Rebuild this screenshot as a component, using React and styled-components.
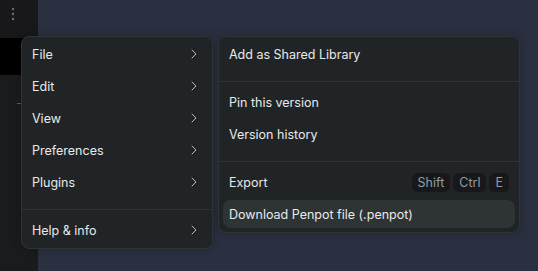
import React from "react";
import styled, { createGlobalStyle } from "styled-components";

const Global = createGlobalStyle`
  html, body { margin: 0; padding: 0; background: #2b3040; }
  body { font-family: Inter, "Noto Sans", sans-serif; }
  #root { width: 538px; height: 271px; overflow: hidden; }
`;

const Page = styled.div`
  position: relative;
  display: flex;
  width: 538px;
  height: 271px;
  background: #2b3040;
`;

const Sidebar = styled.div`
  width: 38px;
  display: flex;
  flex-direction: column;
  background: #1a1b1d;
`;

const SideTop = styled.div`
  height: 38px;
  display: flex;
  justify-content: center;
  padding-top: 7px;
  box-sizing: border-box;
  padding-right: 12px;
  background: #18181a;
`;

const SelectedRow = styled.div`
  height: 37px;
  background: #000;
`;

const SideRest = styled.div`
  flex: 1;
  padding-top: 28px;
  padding-left: 17px;
`;

const Tick = styled.div`
  width: 5px;
  height: 1px;
  background: #5a5e63;
`;

const Canvas = styled.div`
  flex: 1;
  background: #2b3040;
`;

const Menu = styled.div`
  position: absolute;
  top: 36px;
  left: ${(p) => p.$left}px;
  width: ${(p) => p.$width}px;
  box-sizing: border-box;
  background: #212426;
  border: 1px solid #2e3434;
  border-radius: 8px;
  padding: 3px 4px 4px;
  display: flex;
  flex-direction: column;
  gap: 4px;
  box-shadow: 0 0 10px rgba(0, 0, 0, 0.25);
`;

const Item = styled.div`
  height: 28px;
  display: flex;
  align-items: center;
  justify-content: space-between;
  padding: 0 6px 0 6px;
  border-radius: 8px;
  font-size: 12.5px;
  color: #e8e9ea;
  background: ${(p) => (p.$active ? "#2e3434" : "transparent")};
  white-space: nowrap;
`;

const Separator = styled.div`
  height: 1px;
  background: #2e3434;
  margin: 9px -4px 2px;
`;

const Keys = styled.div`
  display: flex;
  gap: 3px;
`;

const Key = styled.span`
  height: 19px;
  display: flex;
  align-items: center;
  padding: 0 6px;
  border-radius: 6px;
  background: #18181a;
  color: #8f9da3;
  font-size: 12.5px;
`;

const Chevron = () => (
  <svg width="16" height="16" viewBox="0 0 16 16" fill="none">
    <path d="M6 4l4 4-4 4" stroke="#b4b8bb" strokeWidth="1" strokeLinecap="round" strokeLinejoin="round" />
  </svg>
);

const Dots = () => (
  <svg width="4" height="14" viewBox="0 0 4 14">
    <circle cx="2" cy="2" r="1.2" fill="#6b6f74" />
    <circle cx="2" cy="7" r="1.2" fill="#6b6f74" />
    <circle cx="2" cy="12" r="1.2" fill="#6b6f74" />
  </svg>
);

export default function App() {
  const main = ["File", "Edit", "View", "Preferences", "Plugins"];
  return (
    <>
      <Global />
      <Page>
        <Sidebar>
          <SideTop>
            <Dots />
          </SideTop>
          <SelectedRow />
          <SideRest>
            <Tick />
          </SideRest>
        </Sidebar>
        <Canvas />
        <Menu $left={21} $width={192}>
          {main.map((m) => (
            <Item key={m}>
              {m}
              <Chevron />
            </Item>
          ))}
          <Separator />
          <Item>
            Help &amp; info
            <Chevron />
          </Item>
        </Menu>
        <Menu $left={218} $width={302}>
          <Item>Add as Shared Library</Item>
          <Separator />
          <Item>Pin this version</Item>
          <Item>Version history</Item>
          <Separator />
          <Item>
            Export
            <Keys>
              <Key>Shift</Key>
              <Key>Ctrl</Key>
              <Key>E</Key>
            </Keys>
          </Item>
          <Item $active>Download Penpot file (.penpot)</Item>
        </Menu>
      </Page>
    </>
  );
}
